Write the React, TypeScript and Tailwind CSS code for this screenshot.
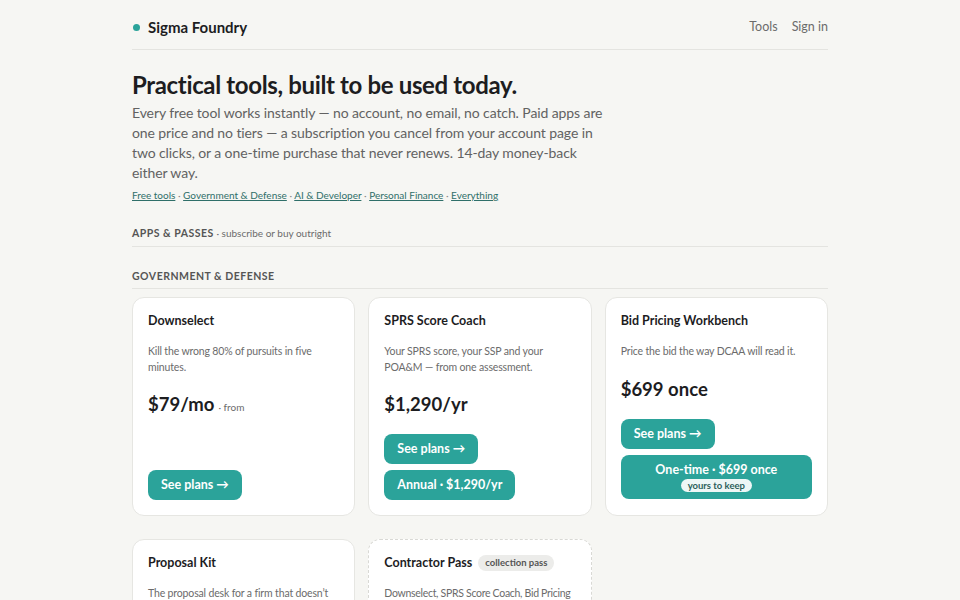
import React from "react";

const teal = "bg-[#2ba39a]";

function Btn({ children }: { children: React.ReactNode }) {
  return (
    <button className={`${teal} text-white font-bold text-[12.5px] rounded-lg h-[30px] px-[13px] self-start`}>
      {children}
    </button>
  );
}

function Card({ children, dashed }: { children: React.ReactNode; dashed?: boolean }) {
  return (
    <div
      className={`bg-white rounded-xl border ${dashed ? "border-dashed border-[#d9d9d5]" : "border-[#e6e6e2]"} p-[15px] flex flex-col`}
    >
      {children}
    </div>
  );
}

function Title({ children }: { children: React.ReactNode }) {
  return <span className="text-[12.5px] font-bold leading-[16px]">{children}</span>;
}

function Desc({ children, pr }: { children: React.ReactNode; pr?: boolean }) {
  return (
    <p className={`mt-[14px] text-[10.5px] leading-4 text-[#6b6b6b] tracking-[-0.15px] ${pr ? "pr-[22px]" : ""}`}>
      {children}
    </p>
  );
}

export default function App() {
  return (
    <div
      className="min-h-screen bg-[#f6f6f3] text-[#1d1d1f]"
      style={{ fontFamily: "Lato, 'Noto Sans', sans-serif" }}
    >
      <div className="w-[696px] mx-auto">
        <header className="flex items-center justify-between pt-[18px] pb-[13px] border-b border-[#e4e4e0]">
          <div className="flex items-center gap-[8px] pl-[1px]">
            <span className="w-[7px] h-[7px] rounded-full bg-[#2ba39a]" />
            <span className="text-[15px] font-bold leading-[18px]">Sigma Foundry</span>
          </div>
          <nav className="flex items-center gap-[14px] text-[12.5px] text-[#6b6b6b] leading-[18px]">
            <span>Tools</span>
            <span>Sign in</span>
          </nav>
        </header>

        <h1 className="mt-[20px] text-[24px] font-bold leading-[30px] tracking-[-0.35px]">
          Practical tools, built to be used today.
        </h1>
        <p className="mt-[3px] w-[520px] text-[14px] leading-[20px] text-[#626262] tracking-[-0.1px]">
          Every free tool works instantly — no account, no email, no catch. Paid apps are
          <br />
          one price and no tiers — a subscription you cancel from your account page in
          <br />
          two clicks, or a one-time purchase that never renews. 14-day money-back
          <br />
          either way.
        </p>
        <div className="mt-[5px] text-[10px] leading-[14px] text-[#8a8a8a]">
          <a className="underline text-[#2f6f69]">Free tools</a> ·{" "}
          <a className="underline text-[#2f6f69]">Government &amp; Defense</a> ·{" "}
          <a className="underline text-[#2f6f69]">AI &amp; Developer</a> ·{" "}
          <a className="underline text-[#2f6f69]">Personal Finance</a> ·{" "}
          <a className="underline text-[#2f6f69]">Everything</a>
        </div>

        <div className="mt-[22px] pb-[6px] border-b border-[#e4e4e0] leading-[14px]">
          <span className="text-[10.5px] font-bold tracking-[0.5px] text-[#555]">APPS &amp; PASSES</span>
          <span className="text-[10px] text-[#6b6b6b]"> · subscribe or buy outright</span>
        </div>

        <div className="mt-[20px] pb-[5px] border-b border-[#e4e4e0] leading-[14px]">
          <span className="text-[10.5px] font-bold tracking-[0.5px] text-[#555]">GOVERNMENT &amp; DEFENSE</span>
        </div>

        <div className="mt-[8px] grid grid-cols-3 gap-x-[13px] gap-y-[23px]">
          <Card>
            <Title>Downselect</Title>
            <Desc pr>Kill the wrong 80% of pursuits in five minutes.</Desc>
            <div className="mt-[17px] leading-6 flex items-baseline gap-1">
              <span className="text-[18.5px] font-bold">$79/mo</span>
              <span className="text-[10px] text-[#6b6b6b]">· from</span>
            </div>
            <div className="mt-auto pt-[17px] flex">
              <Btn>See plans →</Btn>
            </div>
          </Card>

          <Card>
            <Title>SPRS Score Coach</Title>
            <Desc pr>Your SPRS score, your SSP and your POA&amp;M — from one assessment.</Desc>
            <div className="mt-[17px] leading-6">
              <span className="text-[18.5px] font-bold">$1,290/yr</span>
            </div>
            <div className="mt-[17px] flex flex-col gap-[6px]">
              <Btn>See plans →</Btn>
              <Btn>Annual · $1,290/yr</Btn>
            </div>
          </Card>

          <Card>
            <Title>Bid Pricing Workbench</Title>
            <Desc>Price the bid the way DCAA will read it.</Desc>
            <div className="mt-[18px] leading-6">
              <span className="text-[18.5px] font-bold">$699 once</span>
            </div>
            <div className="mt-[17px] flex flex-col gap-[6px]">
              <Btn>See plans →</Btn>
              <button className={`${teal} text-white rounded-lg w-full h-[44px] flex flex-col items-center justify-center`}>
                <span className="text-[12.5px] font-bold leading-[16px]">One-time · $699 once</span>
                <span className="mt-[1px] text-[9.5px] font-bold leading-[13px] bg-[#eef7f6] text-[#2d5f5b] rounded-full px-[7px]">
                  yours to keep
                </span>
              </button>
            </div>
          </Card>

          <Card>
            <Title>Proposal Kit</Title>
            <Desc>The proposal desk for a firm that doesn’t have a proposal desk.</Desc>
          </Card>

          <Card dashed>
            <div className="flex items-center gap-[6px]">
              <Title>Contractor Pass</Title>
              <span className="text-[9.5px] font-bold leading-[16px] bg-[#ececea] text-[#555] rounded-full px-[7px]">
                collection pass
              </span>
            </div>
            <p className="mt-[14px] text-[10.5px] leading-4 text-[#6b6b6b] tracking-[-0.3px]">
              Downselect, SPRS Score Coach, Bid Pricing Workbench and Proposal Kit in one pass.
            </p>
          </Card>
        </div>
        <div className="h-10" />
      </div>
    </div>
  );
}
